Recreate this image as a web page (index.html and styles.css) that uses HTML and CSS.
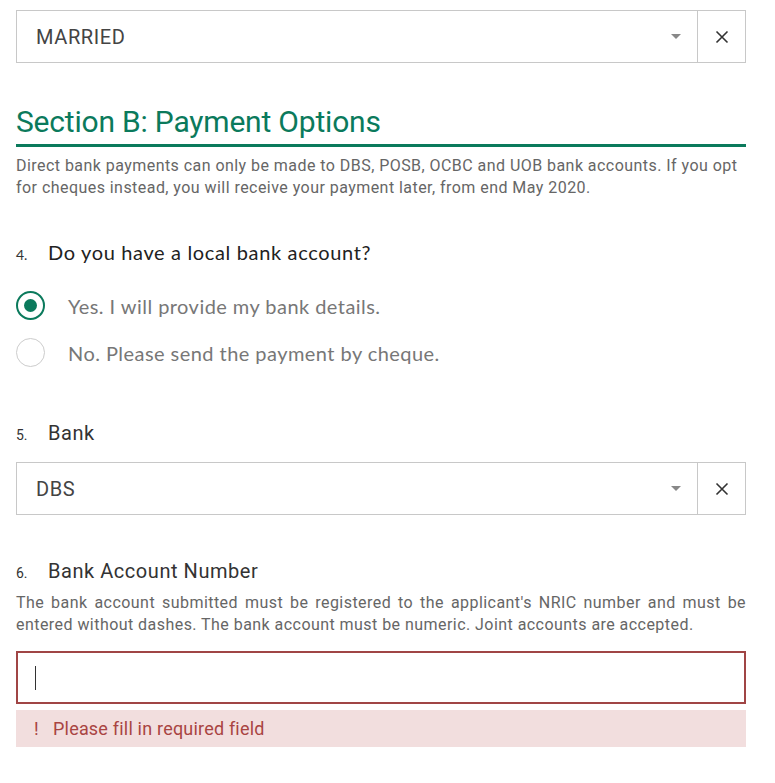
FILE: index.html
```html
<!DOCTYPE html>
<html>
<head>
<meta charset="utf-8">
<link rel="stylesheet" href="styles.css">
</head>
<body>
<div class="page">
  <div class="select">
    <div class="select-value">MARRIED</div>
    <div class="select-arrow"></div>
    <div class="select-clear">
      <svg width="14" height="14" viewBox="0 0 14 14"><path d="M1.5 1.5 L12.5 12.5 M12.5 1.5 L1.5 12.5" stroke="#333" stroke-width="1.6" fill="none"/></svg>
    </div>
  </div>

  <h2 class="section-title">Section B: Payment Options</h2>
  <p class="desc">Direct bank payments can only be made to DBS, POSB, OCBC and UOB bank accounts. If you opt for cheques instead, you will receive your payment later, from end May 2020.</p>

  <div class="question q4">
    <span class="qnum">4.</span><span class="qtext">Do you have a local bank account?</span>
  </div>
  <div class="radios">
    <div class="radio-row"><span class="radio checked"></span><span class="radio-label">Yes. I will provide my bank details.</span></div>
    <div class="radio-row"><span class="radio"></span><span class="radio-label">No. Please send the payment by cheque.</span></div>
  </div>

  <div class="question q5">
    <span class="qnum alt">5.</span><span class="qtext alt">Bank</span>
  </div>
  <div class="select">
    <div class="select-value">DBS</div>
    <div class="select-arrow"></div>
    <div class="select-clear">
      <svg width="14" height="14" viewBox="0 0 14 14"><path d="M1.5 1.5 L12.5 12.5 M12.5 1.5 L1.5 12.5" stroke="#333" stroke-width="1.6" fill="none"/></svg>
    </div>
  </div>

  <div class="question q6">
    <span class="qnum alt">6.</span><span class="qtext alt">Bank Account Number</span>
  </div>
  <p class="desc justify">The bank account submitted must be registered to the applicant's NRIC number and must be entered without dashes. The bank account must be numeric. Joint accounts are accepted.</p>
  <div class="input error"><span class="caret"></span></div>
  <div class="error-msg"><span class="bang">!</span>Please fill in required field</div>
</div>
</body>
</html>
```
FILE: styles.css
```css
* { box-sizing: border-box; }
body { margin: 0; background: #fff; font-family: Roboto, "Liberation Sans", sans-serif; }
.page { width: 730px; margin-left: 16px; padding-top: 10px; }

.select {
  display: flex; align-items: center;
  height: 53px; border: 1px solid #c8c8c8; background: #fff;
}
.select-value { flex: 1; padding-left: 19px; font-size: 20px; color: #444; font-family: Roboto, sans-serif; letter-spacing: 0.6px; }
.select-arrow {
  width: 0; height: 0; border-left: 5px solid transparent; border-right: 5px solid transparent;
  border-top: 5px solid #888; margin-right: 16px;
}
.select-clear {
  width: 48px; height: 100%; border-left: 1px solid #c8c8c8;
  display: flex; align-items: center; justify-content: center;
}

.section-title {
  margin: 41px 0 0; padding-bottom: 4px;
  font-family: Roboto, sans-serif; font-weight: 400; font-size: 30px; color: #0b7a5c;
  letter-spacing: -0.2px; line-height: 36px;
  border-bottom: 3px solid #0b7a5c;
}
.desc { margin: 8px 0 0; font-size: 16px; line-height: 22px; color: #666; letter-spacing: 0.45px; }
.desc.justify { text-align: justify; margin-top: 8px; }

.question { display: flex; align-items: baseline; }
.q4 { margin-top: 40px; }
.q5 { margin-top: 53px; }
.q6 { margin-top: 43px; }
.qnum { width: 32px; font-family: Lato, sans-serif; font-size: 14px; color: #333; }
.qtext { font-family: Lato, sans-serif; font-size: 20px; color: #222; line-height: 26px; letter-spacing: 0.65px; }
.qnum.alt, .qtext.alt { font-family: Roboto, sans-serif; }
.qtext.alt { font-size: 20px; letter-spacing: 0.55px; color: #333; }

.radios { margin-top: 26px; display: flex; flex-direction: column; gap: 18px; }
.radio-row { display: flex; align-items: center; height: 29px; }
.radio {
  width: 29px; height: 29px; border-radius: 50%; border: 1px solid #ccc; background: #fff;
  display: flex; align-items: center; justify-content: center; flex: none;
}
.radio.checked { border: 2px solid #0b7a5c; }
.radio.checked::after { content: ""; width: 13px; height: 13px; border-radius: 50%; background: #0b7a5c; }
.radio-label { margin-left: 23px; font-family: Lato, sans-serif; font-size: 20px; color: #777; letter-spacing: 0.45px; }

.q5 + .select { margin-top: 16px; }

.input { height: 53px; margin-top: 15px; border: 2px solid #a04545; display: flex; align-items: center; padding-left: 17px; }
.caret { width: 1px; height: 24px; background: #333; }
.error-msg {
  margin-top: 6px; height: 37px; background: #f2dede; color: #a94442;
  display: flex; align-items: center; padding-left: 18px; font-size: 18px; letter-spacing: 0.2px;
}
.bang { width: 19px; }
```
